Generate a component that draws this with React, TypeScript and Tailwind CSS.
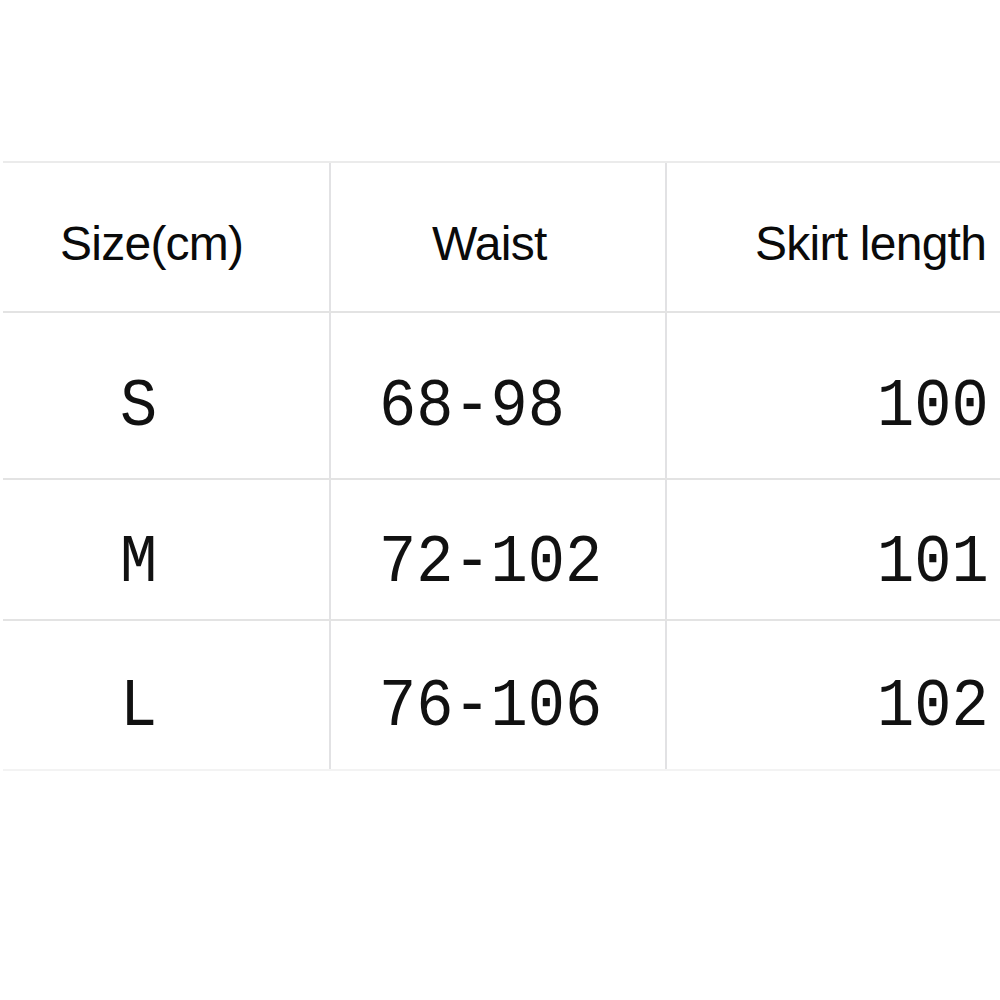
import React from "react";

const sans = { fontFamily: '"Liberation Sans", Arial, sans-serif' };
const mono = { fontFamily: '"Liberation Mono", "Courier New", monospace' };

const rows = [
  { size: "S", waist: "68-98", len: "100", h: "h-[167px]", pt: "pt-[63px]" },
  { size: "M", waist: "72-102", len: "101", h: "h-[141px]", pt: "pt-[52px]" },
  { size: "L", waist: "76-106", len: "102", h: "h-[150px]", pt: "pt-[55px]" },
];

function Mono({ children }: { children: React.ReactNode }) {
  return (
    <span
      className="inline-block text-[62px] leading-none text-[#111] scale-y-[1.1]"
      style={mono}
    >
      {children}
    </span>
  );
}

export default function App() {
  return (
    <div className="w-[1000px] h-[1000px] bg-white pt-[161px]">
      <div className="ml-[3px] w-[997px] border-t-2 border-[#ebebeb]">
        <div className="flex h-[150px] border-b-2 border-[#e3e3e3]">
          <div className="w-[328px] border-r-2 border-[#e2e2e4] pl-[57px] pt-[57px]">
            <span className="text-[48px] leading-none tracking-[-0.75px] text-[#0a0a0a]" style={sans}>Size(cm)</span>
          </div>
          <div className="w-[336px] border-r-2 border-[#e2e2e4] pl-[101px] pt-[57px]">
            <span className="text-[48px] leading-none tracking-[-0.75px] text-[#0a0a0a]" style={sans}>Waist</span>
          </div>
          <div className="flex-1 pl-[88px] pt-[57px] whitespace-nowrap">
            <span className="text-[48px] leading-none tracking-[-0.75px] text-[#0a0a0a]" style={sans}>Skirt length</span>
          </div>
        </div>
        {rows.map((r, i) => (
          <div
            key={r.size}
            className={`flex ${r.h} border-b-2 ${i === rows.length - 1 ? "border-[#f3f3f3]" : "border-[#e3e3e3]"}`}
          >
            <div className={`w-[328px] border-r-2 border-[#e2e2e4] pl-[117px] ${r.pt}`}>
              <Mono>{r.size}</Mono>
            </div>
            <div className={`w-[336px] border-r-2 border-[#e2e2e4] pl-[48px] ${r.pt}`}>
              <Mono>{r.waist}</Mono>
            </div>
            <div className={`flex-1 pl-[210px] ${r.pt}`}>
              <Mono>{r.len}</Mono>
            </div>
          </div>
        ))}
      </div>
    </div>
  );
}
